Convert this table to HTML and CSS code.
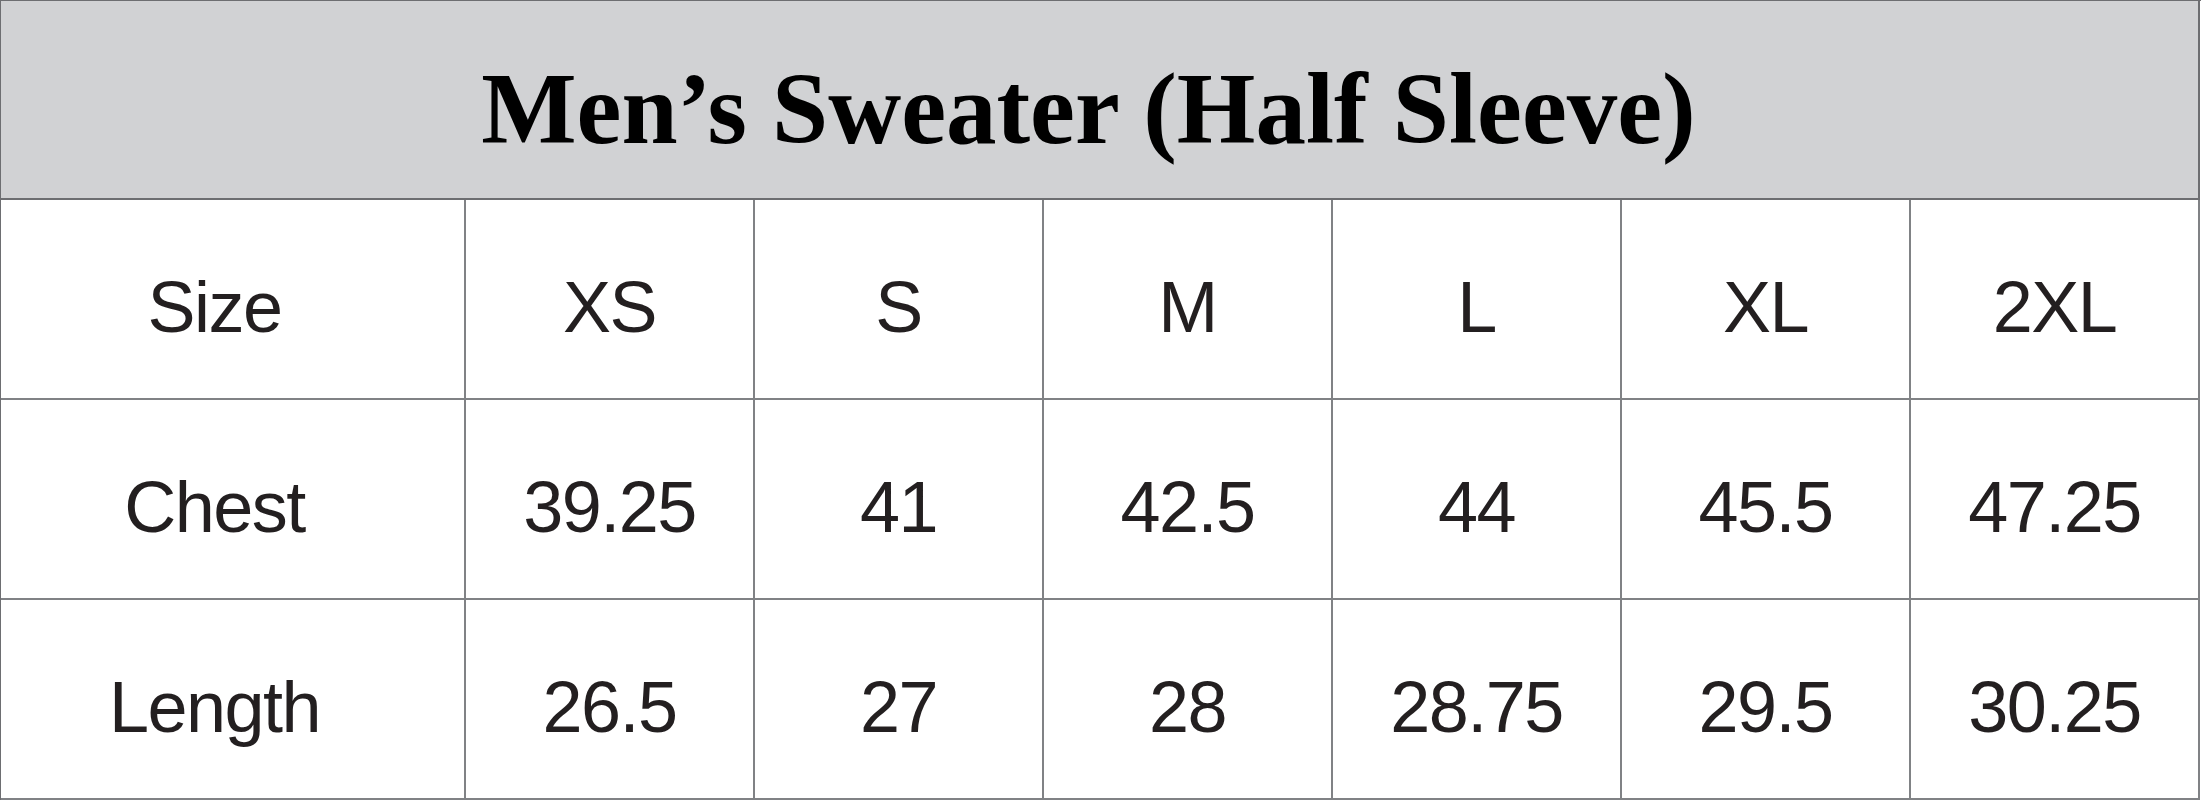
FILE: index.html
```html
<!DOCTYPE html>
<html lang="en">
<head>
    <meta charset="UTF-8">
    <meta name="viewport" content="width=device-width, initial-scale=1.0">
    <title>Men's Sweater (Half Sleeve) Size Chart</title>
    <link rel="stylesheet" href="styles.css">
</head>
<body>
    <div id="chart">
        <div class="title">Men’s Sweater (Half Sleeve)</div>

        <div class="cell label">Size</div>
        <div class="cell">XS</div>
        <div class="cell">S</div>
        <div class="cell">M</div>
        <div class="cell">L</div>
        <div class="cell">XL</div>
        <div class="cell">2XL</div>

        <div class="cell label">Chest</div>
        <div class="cell">39.25</div>
        <div class="cell">41</div>
        <div class="cell">42.5</div>
        <div class="cell">44</div>
        <div class="cell">45.5</div>
        <div class="cell">47.25</div>

        <div class="cell label">Length</div>
        <div class="cell">26.5</div>
        <div class="cell">27</div>
        <div class="cell">28</div>
        <div class="cell">28.75</div>
        <div class="cell">29.5</div>
        <div class="cell">30.25</div>
    </div>
</body>
</html>
```

FILE: styles.css
```css
body {
    margin: 0;
    background-color: #ffffff;
    font-family: 'Liberation Sans', Arial, sans-serif;
    color: #231f20;
}

#chart {
    width: 2200px;
    display: grid;
    grid-template-columns: 465px repeat(6, 289px);
    border-top: 1px solid #6d6e71;
    border-left: 1px solid #6d6e71;
}

.title {
    grid-column: 1 / -1;
    height: 199px;
    box-sizing: border-box;
    display: flex;
    align-items: center;
    justify-content: center;
    padding-top: 18px;
    padding-right: 22px;
    background-color: #d1d2d4;
    border-right: 2px solid #6d6e71;
    border-bottom: 2px solid #6d6e71;
    font-family: 'Liberation Serif', 'Times New Roman', serif;
    font-weight: bold;
    font-size: 101px;
    color: #000000;
}

.cell {
    height: 200px;
    box-sizing: border-box;
    display: flex;
    align-items: center;
    justify-content: center;
    padding-top: 16px;
    border-right: 2px solid #808285;
    border-bottom: 2px solid #808285;
    font-size: 72px;
    letter-spacing: -1.5px;
}

.label {
    padding-right: 36px;
}
```
